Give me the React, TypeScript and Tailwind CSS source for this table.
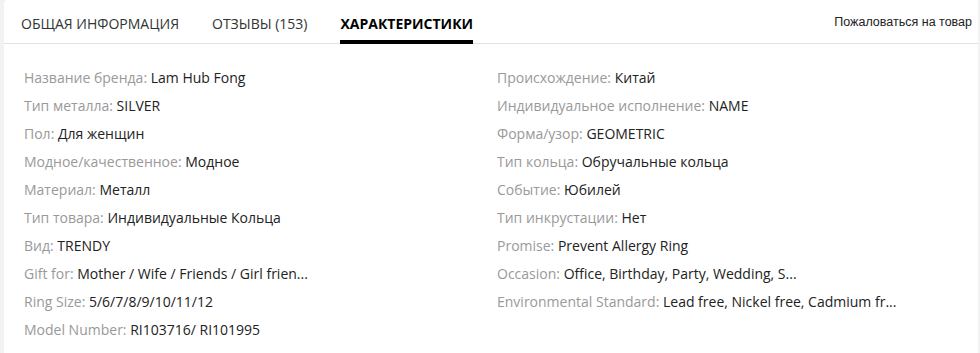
const left: [string, string][] = [
  ['Название бренда', 'Lam Hub Fong'],
  ['Тип металла', 'SILVER'],
  ['Пол', 'Для женщин'],
  ['Модное/качественное', 'Модное'],
  ['Материал', 'Металл'],
  ['Тип товара', 'Индивидуальные Кольца'],
  ['Вид', 'TRENDY'],
  ['Gift for', 'Mother / Wife / Friends / Girl frien...'],
  ['Ring Size', '5/6/7/8/9/10/11/12'],
  ['Model Number', 'RI103716/ RI101995'],
];

const right: [string, string][] = [
  ['Происхождение', 'Китай'],
  ['Индивидуальное исполнение', 'NAME'],
  ['Форма/узор', 'GEOMETRIC'],
  ['Тип кольца', 'Обручальные кольца'],
  ['Событие', 'Юбилей'],
  ['Тип инкрустации', 'Нет'],
  ['Promise', 'Prevent Allergy Ring'],
  ['Occasion', 'Office, Birthday, Party, Wedding, S...'],
  ['Environmental Standard', 'Lead free, Nickel free, Cadmium fr...'],
];

function PropList({ items }: { items: [string, string][] }) {
  return (
    <ul className="flex flex-col">
      {items.map(([k, v]) => (
        <li key={k} className="h-[28px] leading-[28px] text-[14px] whitespace-nowrap">
          <span className="text-[#999]">{k}: </span>
          <span className="text-[#222]">{v}</span>
        </li>
      ))}
    </ul>
  );
}

export default function App() {
  return (
    <div className="min-h-[353px] bg-[#f2f2f2] pl-[4px] pr-[2px] font-['Open_Sans',sans-serif]">
      <div className="bg-white rounded-tl-[4px] min-h-[353px]">
        <div className="flex items-end h-[44px] border-b border-[#e2e2e2] pl-[17px] pr-[6px]">
          <nav className="flex items-end gap-[33px] text-[14px] uppercase">
            <a className="h-[44px] pt-[7px] leading-[33px] -mb-px text-[#333] border-b-4 border-transparent">Общая информация</a>
            <a className="h-[44px] pt-[7px] leading-[33px] -mb-px text-[#333] border-b-4 border-transparent">Отзывы (153)</a>
            <a className="h-[44px] pt-[7px] leading-[33px] -mb-px font-bold text-black border-b-4 border-black">
              Характеристики
            </a>
          </nav>
          <a className="ml-auto h-[44px] pt-[3px] leading-[41px] text-[12.5px] text-[#222] font-['Liberation_Sans',Arial,sans-serif]">
            Пожаловаться на товар
          </a>
        </div>
        <div className="grid grid-cols-[473px_1fr] pl-[20px] pt-[20px]">
          <PropList items={left} />
          <PropList items={right} />
        </div>
      </div>
    </div>
  );
}
